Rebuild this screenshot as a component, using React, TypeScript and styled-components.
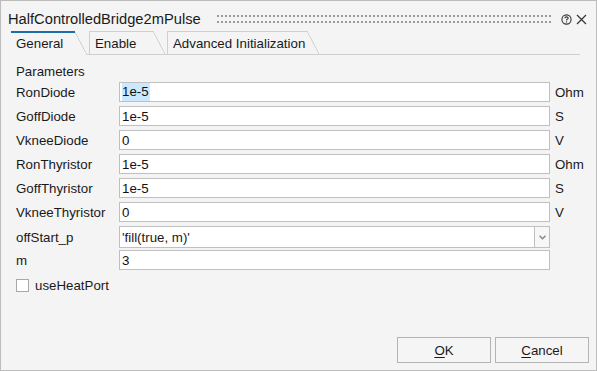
import { Fragment } from "react";
import styled, { createGlobalStyle } from "styled-components";

const GlobalStyle = createGlobalStyle`
  html, body {
    margin: 0;
    padding: 0;
    background: #f4f4f4;
  }
  * {
    box-sizing: border-box;
  }
`;

const params = [
  { name: "RonDiode", value: "1e-5", unit: "Ohm", selected: true },
  { name: "GoffDiode", value: "1e-5", unit: "S" },
  { name: "VkneeDiode", value: "0", unit: "V" },
  { name: "RonThyristor", value: "1e-5", unit: "Ohm" },
  { name: "GoffThyristor", value: "1e-5", unit: "S" },
  { name: "VkneeThyristor", value: "0", unit: "V" }
];

const tabs = [
  { title: "General", width: 64, active: true },
  { title: "Enable", width: 64 },
  { title: "Advanced Initialization", width: 140 }
];

const Window = styled.div`
  width: 597px;
  height: 371px;
  border: 1px solid #bcbcbc;
  background: #f4f4f4;
  display: flex;
  flex-direction: column;
  font-family: "Liberation Sans", Arial, sans-serif;
  font-size: 13.3px;
  color: #1a1a1a;
`;

const TitleBar = styled.div`
  height: 30px;
  padding: 6px 9px 0 7px;
  display: flex;
  align-items: center;
  gap: 4px;
`;

const Title = styled.div`
  font-size: 14.7px;
  color: #1a1a1a;
`;

const DotFill = styled.div`
  flex: 1;
  height: 8px;
  margin: 0 4px 0 12px;
  background-image: radial-gradient(
    circle at 1px 1px,
    #9a9a9a 0.9px,
    transparent 1.2px
  );
  background-size: 4px 6px;
`;

const IconButton = styled.div`
  width: 11px;
  height: 14px;
  display: flex;
  align-items: center;
  justify-content: center;
`;

const TabBar = styled.div`
  height: 24px;
  margin: 0 16px 0 10px;
  display: flex;
  align-items: flex-end;
  gap: 2px;
  border-bottom: 1px solid #cfcfcf;
`;

const Tab = styled.div<{ $active?: boolean }>`
  display: flex;
  height: ${(p) => (p.$active ? "24px" : "23px")};
  margin-bottom: ${(p) => (p.$active ? "-1px" : "0")};
  background: #f4f4f4;
`;

const TabLabel = styled.div<{ $active?: boolean; $w: number }>`
  width: ${(p) => p.$w}px;
  padding-left: 5px;
  padding-bottom: ${(p) => (p.$active ? "1px" : "0")};
  display: flex;
  align-items: center;
  border-top: ${(p) => (p.$active ? "2px solid #1c6fa6" : "1px solid #cfcfcf")};
  border-left: ${(p) => (p.$active ? "none" : "1px solid #cfcfcf")};
  color: #1a1a1a;
`;

const TabSlant = styled.div<{ $active?: boolean }>`
  width: 12px;
  height: 23px;
  margin-top: ${(p) => (p.$active ? "1px" : "0")};
  background: linear-gradient(
    to top right,
    transparent calc(50% - 0.7px),
    #c8c8c8 50%,
    transparent calc(50% + 0.7px)
  );
`;

const Body = styled.div`
  padding: 6px 0 0 15px;
  display: flex;
  flex-direction: column;
`;

const SectionTitle = styled.div`
  height: 21px;
  display: flex;
  align-items: center;
`;

const Grid = styled.div`
  display: grid;
  grid-template-columns: 103px 431px 1fr;
  grid-auto-rows: 20px;
  row-gap: 4px;
`;

const Label = styled.div<{ $tall?: boolean }>`
  display: flex;
  align-items: center;
  height: ${(p) => (p.$tall ? "22px" : "20px")};
`;

const Unit = styled.div`
  display: flex;
  align-items: center;
  padding-left: 5px;
`;

const Field = styled.div`
  height: 20px;
  border: 1px solid #c0c0c0;
  background: #ffffff;
  padding-left: 2px;
  display: flex;
  align-items: center;
  color: #111;
`;

const Selection = styled.span`
  background: #cce8ff;
  padding: 2px 1px 2px 0;
  line-height: 14px;
`;

const Combo = styled.div`
  height: 22px;
  border: 1px solid #c0c0c0;
  background: #ffffff;
  display: flex;
  align-items: stretch;
`;

const ComboText = styled.div`
  flex: 1;
  padding-left: 2px;
  display: flex;
  align-items: center;
`;

const ComboButton = styled.div`
  width: 15px;
  border-left: 1px solid #c0c0c0;
  background: #f7f7f7;
  display: flex;
  align-items: center;
  justify-content: center;
`;

const CheckRow = styled.label`
  margin-top: 8px;
  display: flex;
  align-items: center;
  gap: 6px;
  height: 14px;
`;

const CheckBox = styled.span`
  width: 13px;
  height: 13px;
  border: 1px solid #a8a8a8;
  background: #ffffff;
`;

const Footer = styled.div`
  margin-top: auto;
  padding: 0 7px 7px 0;
  display: flex;
  justify-content: flex-end;
  gap: 4px;
`;

const Button = styled.button`
  width: 94px;
  height: 26px;
  border: 1px solid #b4b4b4;
  background: #f5f5f5;
  font-family: "Liberation Sans", Arial, sans-serif;
  font-size: 13.3px;
  color: #1a1a1a;
  padding: 0;
  u {
    text-decoration-thickness: 1px;
    text-underline-offset: 2px;
  }
`;

function HelpIcon() {
  return (
    <svg width="11" height="11" viewBox="0 0 11 11">
      <circle cx="5.5" cy="5.5" r="4.6" fill="none" stroke="#333" strokeWidth="1.1" />
      <path
        d="M3.9 4.3 C3.9 3.4 4.6 2.9 5.5 2.9 C6.4 2.9 7.1 3.4 7.1 4.2 C7.1 5.1 5.5 5.3 5.5 6.4"
        fill="none"
        stroke="#333"
        strokeWidth="1.1"
      />
      <circle cx="5.5" cy="7.9" r="0.7" fill="#333" />
    </svg>
  );
}

function CloseIcon() {
  return (
    <svg width="11" height="11" viewBox="0 0 11 11">
      <path d="M1 1 L10 10 M10 1 L1 10" stroke="#333" strokeWidth="1.2" />
    </svg>
  );
}

function ChevronDown() {
  return (
    <svg width="7" height="5" viewBox="0 0 7 5">
      <path d="M0.5 0.8 L3.5 3.8 L6.5 0.8" fill="none" stroke="#8a8a8a" strokeWidth="1.5" />
    </svg>
  );
}

export default function App() {
  return (
    <>
      <GlobalStyle />
      <Window>
        <TitleBar>
          <Title>HalfControlledBridge2mPulse</Title>
          <DotFill />
          <IconButton>
            <HelpIcon />
          </IconButton>
          <IconButton>
            <CloseIcon />
          </IconButton>
        </TitleBar>
        <TabBar>
          {tabs.map((t) => (
            <Tab key={t.title} $active={t.active}>
              <TabLabel $active={t.active} $w={t.width}>
                {t.title}
              </TabLabel>
              <TabSlant $active={t.active} />
            </Tab>
          ))}
        </TabBar>
        <Body>
          <SectionTitle>Parameters</SectionTitle>
          <Grid>
            {params.map((p) => (
              <Fragment key={p.name}>
                <Label>{p.name}</Label>
                <Field>{p.selected ? <Selection>{p.value}</Selection> : p.value}</Field>
                <Unit>{p.unit}</Unit>
              </Fragment>
            ))}
            <Label $tall>offStart_p</Label>
            <Combo>
              <ComboText>'fill(true, m)'</ComboText>
              <ComboButton>
                <ChevronDown />
              </ComboButton>
            </Combo>
            <Unit />
            <Label>m</Label>
            <Field>3</Field>
            <Unit />
          </Grid>
          <CheckRow>
            <CheckBox />
            useHeatPort
          </CheckRow>
        </Body>
        <Footer>
          <Button>
            <u>O</u>K
          </Button>
          <Button>
            <u>C</u>ancel
          </Button>
        </Footer>
      </Window>
    </>
  );
}
